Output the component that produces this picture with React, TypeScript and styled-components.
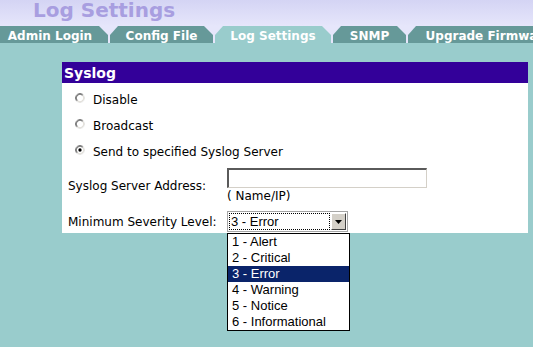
import React from "react";
import styled, { createGlobalStyle } from "styled-components";

const Global = createGlobalStyle`
  html, body { margin: 0; padding: 0; background: #99cccc; overflow: hidden; }
  body { font-family: "DejaVu Sans", Verdana, sans-serif; }
  * { box-sizing: border-box; }
`;

const Page = styled.div`
  width: 533px;
  height: 347px;
  display: flex;
  flex-direction: column;
  background: #99cccc;
  overflow: hidden;
`;

const Header = styled.header`
  height: 26px;
  flex: 0 0 auto;
  background: linear-gradient(#d4d4f4, #e6e6fb);
  padding-left: 33px;
`;

const Title = styled.h1`
  margin: 0;
  font: bold 20px/20px "DejaVu Sans", Verdana, sans-serif;
  color: #a89ee0;
`;

const TabBar = styled.nav`
  height: 17px;
  flex: 0 0 auto;
  display: flex;
  gap: 2px;
  margin-left: -8px;
  background: #e6e6fb;
`;

const Tab = styled.div<{ $active?: boolean; $w: number }>`
  flex: 0 0 auto;
  width: ${(p) => p.$w}px;
  height: 17px;
  padding-top: 3px;
  background: ${(p) => (p.$active ? "#99cccc" : "#669999")};
  color: #fff;
  font: bold 12px/14px "DejaVu Sans", Verdana, sans-serif;
  text-align: center;
  white-space: nowrap;
  clip-path: polygon(0 100%, 0 9px, 8px 0, calc(100% - 9px) 0, 100% 9px, 100% 100%);
`;

const Content = styled.main`
  flex: 1;
  padding: 19px 0 0 62px;
`;

const Panel = styled.section`
  width: 466px;
  background: #fff;
`;

const PanelHead = styled.div`
  height: 21px;
  background: #330099;
  color: #fff;
  font: bold 14px/19px "DejaVu Sans", Verdana, sans-serif;
  padding: 2px 0 0 2px;
`;

const RadioList = styled.div`
  display: flex;
  flex-direction: column;
  padding: 4px 0 0 13px;
`;

const RadioRow = styled.label`
  height: 26px;
  display: flex;
  align-items: center;
  gap: 8px;
  font: 12px "DejaVu Sans", Verdana, sans-serif;
  color: #000;
`;

const RadioMark = styled.svg`
  flex: 0 0 auto;
  width: 10px;
  height: 10px;
  margin-bottom: 4px;
`;

const FormGrid = styled.div`
  display: grid;
  grid-template-columns: 159px auto;
  row-gap: 7px;
  align-items: center;
  padding: 3px 0 1px 6px;
  font: 12px "DejaVu Sans", Verdana, sans-serif;
  color: #000;
`;

const Label = styled.div`
  white-space: nowrap;
`;

const Field = styled.div`
  display: flex;
  flex-direction: column;
  align-items: flex-start;
`;

const TextInput = styled.div`
  width: 200px;
  height: 20px;
  background: #fff;
  border-top: 2px solid #5a5a5a;
  border-left: 2px solid #5a5a5a;
  border-right: 1px solid #d4d0c8;
  border-bottom: 1px solid #d4d0c8;
`;

const Hint = styled.div`
  line-height: 16px;
  white-space: nowrap;
`;

const SelectBox = styled.div`
  position: relative;
  width: 121px;
  height: 21px;
  display: flex;
  gap: 1px;
  padding: 1px;
  border: 1px solid #a5a5a5;
  background: #fff;
`;

const SelectValue = styled.div`
  flex: 1;
  border: 1px dotted #000;
  font: 13px/15px "Liberation Sans", Arial, sans-serif;
  padding-left: 1px;
  color: #000;
`;

const ArrowBtn = styled.div`
  width: 15px;
  background: #d4d0c8;
  border: 1px solid;
  border-color: #fff #404040 #404040 #fff;
  display: flex;
  align-items: center;
  justify-content: center;
`;

const DropList = styled.ul`
  position: absolute;
  top: 21px;
  left: -1px;
  width: 123px;
  margin: 0;
  padding: 0;
  list-style: none;
  background: #fff;
  border: 1px solid #000;
  z-index: 2;
`;

const DropItem = styled.li<{ $sel?: boolean }>`
  height: 16px;
  padding-left: 4px;
  font: 13px/16px "Liberation Sans", Arial, sans-serif;
  white-space: nowrap;
  background: ${(p) => (p.$sel ? "#0a246a" : "#fff")};
  color: ${(p) => (p.$sel ? "#fff" : "#000")};
`;

const Radio = ({ checked }: { checked?: boolean }) => (
  <RadioMark viewBox="0 0 12 12">
    <circle cx="6" cy="6" r="5.5" fill="#fff" />
    <path d="M2.1 9.9 A5.5 5.5 0 0 1 9.9 2.1" stroke="#808080" strokeWidth="1" fill="none" />
    <path d="M9.9 2.1 A5.5 5.5 0 0 1 2.1 9.9" stroke="#e8e8e8" strokeWidth="1" fill="none" />
    <path d="M2.8 9.2 A4.5 4.5 0 0 1 9.2 2.8" stroke="#404040" strokeWidth="1" fill="none" />
    <path d="M9.2 2.8 A4.5 4.5 0 0 1 2.8 9.2" stroke="#d4d0c8" strokeWidth="1" fill="none" />
    {checked && <circle cx="6" cy="6" r="2" fill="#000" />}
  </RadioMark>
);

const tabs = [
  { label: "Admin Login", w: 116 },
  { label: "Config File", w: 103 },
  { label: "Log Settings", w: 116, active: true },
  { label: "SNMP", w: 73 },
  { label: "Upgrade Firmware", w: 161 },
];

const levels = ["1 - Alert", "2 - Critical", "3 - Error", "4 - Warning", "5 - Notice", "6 - Informational"];

export default function App() {
  return (
    <Page>
      <Global />
      <Header>
        <Title>Log Settings</Title>
      </Header>
      <TabBar>
        {tabs.map((t) => (
          <Tab key={t.label} $w={t.w} $active={t.active}>
            {t.label}
          </Tab>
        ))}
      </TabBar>
      <Content>
        <Panel>
          <PanelHead>Syslog</PanelHead>
          <RadioList>
            <RadioRow>
              <Radio />
              Disable
            </RadioRow>
            <RadioRow>
              <Radio />
              Broadcast
            </RadioRow>
            <RadioRow>
              <Radio checked />
              Send to specified Syslog Server
            </RadioRow>
          </RadioList>
          <FormGrid>
            <Label>Syslog Server Address:</Label>
            <Field>
              <TextInput />
              <Hint>( Name/IP)</Hint>
            </Field>
            <Label>Minimum Severity Level:</Label>
            <Field>
              <SelectBox>
                <SelectValue>3 - Error</SelectValue>
                <ArrowBtn>
                  <svg width="7" height="4" viewBox="0 0 7 4">
                    <path d="M0 0 H7 L3.5 4 Z" fill="#000" />
                  </svg>
                </ArrowBtn>
                <DropList>
                  {levels.map((l) => (
                    <DropItem key={l} $sel={l === "3 - Error"}>
                      {l}
                    </DropItem>
                  ))}
                </DropList>
              </SelectBox>
            </Field>
          </FormGrid>
        </Panel>
      </Content>
    </Page>
  );
}
